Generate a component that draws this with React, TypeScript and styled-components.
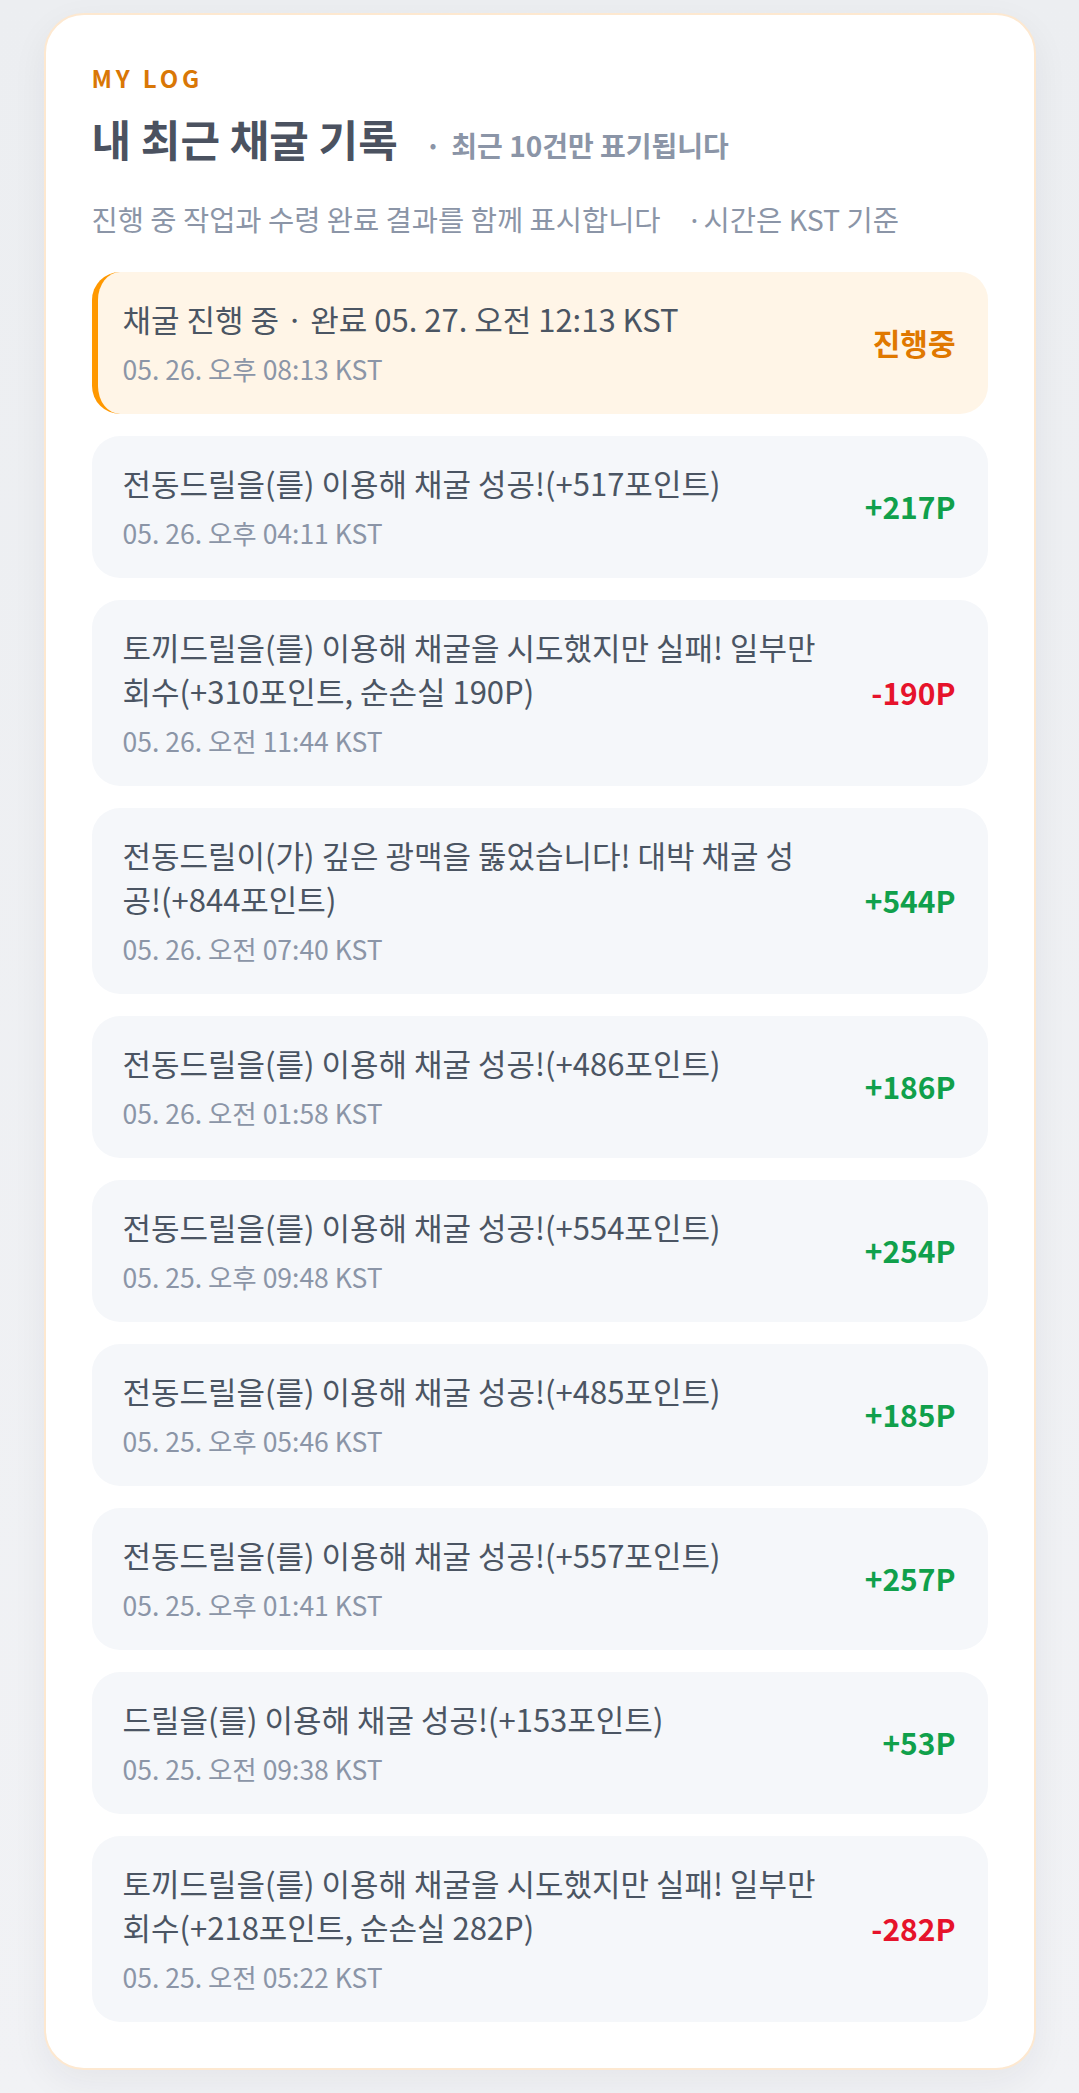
import React from 'react';
import styled, {createGlobalStyle} from 'styled-components';

type LogKind = 'pending' | 'plus' | 'minus'

type LogType = {
    id: number
    message: string
    time: string
    amount: string
    kind: LogKind
}

const logs: LogType[] = [
    {id: 1, message: '채굴 진행 중 · 완료 05. 27. 오전 12:13 KST', time: '05. 26. 오후 08:13 KST', amount: '진행중', kind: 'pending'},
    {id: 2, message: '전동드릴을(를) 이용해 채굴 성공!(+517포인트)', time: '05. 26. 오후 04:11 KST', amount: '+217P', kind: 'plus'},
    {id: 3, message: '토끼드릴을(를) 이용해 채굴을 시도했지만 실패! 일부만 회수(+310포인트, 순손실 190P)', time: '05. 26. 오전 11:44 KST', amount: '-190P', kind: 'minus'},
    {id: 4, message: '전동드릴이(가) 깊은 광맥을 뚫었습니다! 대박 채굴 성공!(+844포인트)', time: '05. 26. 오전 07:40 KST', amount: '+544P', kind: 'plus'},
    {id: 5, message: '전동드릴을(를) 이용해 채굴 성공!(+486포인트)', time: '05. 26. 오전 01:58 KST', amount: '+186P', kind: 'plus'},
    {id: 6, message: '전동드릴을(를) 이용해 채굴 성공!(+554포인트)', time: '05. 25. 오후 09:48 KST', amount: '+254P', kind: 'plus'},
    {id: 7, message: '전동드릴을(를) 이용해 채굴 성공!(+485포인트)', time: '05. 25. 오후 05:46 KST', amount: '+185P', kind: 'plus'},
    {id: 8, message: '전동드릴을(를) 이용해 채굴 성공!(+557포인트)', time: '05. 25. 오후 01:41 KST', amount: '+257P', kind: 'plus'},
    {id: 9, message: '드릴을(를) 이용해 채굴 성공!(+153포인트)', time: '05. 25. 오전 09:38 KST', amount: '+53P', kind: 'plus'},
    {id: 10, message: '토끼드릴을(를) 이용해 채굴을 시도했지만 실패! 일부만 회수(+218포인트, 순손실 282P)', time: '05. 25. 오전 05:22 KST', amount: '-282P', kind: 'minus'},
]

const amountColors: Record<LogKind, string> = {
    pending: '#e07800',
    plus: '#10a04b',
    minus: '#e6132b',
}

export default function App() {
    return (
        <>
            <GlobalStyle/>
            <Page>
                <Card>
                    <Eyebrow>MY LOG</Eyebrow>
                    <TitleRow>
                        <Title>내 최근 채굴 기록</Title>
                        <Note><Dot>·</Dot>최근 10건만 표기됩니다</Note>
                    </TitleRow>
                    <Description>
                        진행 중 작업과 수령 완료 결과를 함께 표시합니다
                        <Sep>·</Sep>
                        시간은 KST 기준
                    </Description>
                    <List>
                        {logs.map(log => (
                            <Item key={log.id} active={log.kind === 'pending'}>
                                <Body>
                                    <Message>{log.message}</Message>
                                    <Time>{log.time}</Time>
                                </Body>
                                <Amount color={amountColors[log.kind]}>{log.amount}</Amount>
                            </Item>
                        ))}
                    </List>
                </Card>
            </Page>
        </>
    );
}

const GlobalStyle = createGlobalStyle`
  html, body {
    margin: 0;
    padding: 0;
    background: #eef0f3;
  }

  body {
    font-family: "Noto Sans CJK KR", "Noto Sans", sans-serif;
  }

  * {
    box-sizing: border-box;
  }
`

const Page = styled.div`
  padding: 13px 0 25px;
  background: linear-gradient(180deg, #eceef1 0%, #f1f2f5 100%);
`

const Card = styled.section`
  width: 992px;
  margin: 0 auto;
  padding: 45px 46px 46px;
  background: #ffffff;
  border: 2px solid #fde8d0;
  border-radius: 40px;
  box-shadow: 0 12px 36px rgba(30, 41, 59, 0.06);
`

const Eyebrow = styled.div`
  color: #d97706;
  font-size: 24px;
  line-height: 36px;
  font-weight: 700;
  letter-spacing: 0.16em;
`

const TitleRow = styled.div`
  display: flex;
  align-items: baseline;
  margin-top: 14px;
`

const Title = styled.h2`
  margin: 0;
  color: #4b5260;
  font-size: 43px;
  line-height: 56px;
  font-weight: 700;
`

const Note = styled.span`
  margin-left: 27px;
  color: #8b95a7;
  font-size: 28px;
  font-weight: 600;
`

const Dot = styled.span`
  margin-right: 10px;
`

const Description = styled.p`
  margin: 33px 0 0;
  color: #8b95a7;
  font-size: 28.5px;
  line-height: 40px;
`

const Sep = styled.span`
  margin: 0 1px 0 26px;
`

const List = styled.div`
  display: flex;
  flex-direction: column;
  gap: 22px;
  margin-top: 33px;
`

type ItemPropsType = {
    active: boolean
}

const Item = styled.div<ItemPropsType>`
  display: flex;
  align-items: center;
  gap: 20px;
  padding: 25px 32px 27px 25px;
  border-left: 6px solid ${props => props.active ? '#ff9800' : 'transparent'};
  border-radius: 28px;
  background: ${props => props.active ? '#fff5e7' : '#f5f7fa'};
`

const Body = styled.div`
  flex: 1;
  min-width: 0;
  display: flex;
  flex-direction: column;
  gap: 10px;
`

const Message = styled.div`
  color: #4b5563;
  font-size: 31px;
  line-height: 44px;
`

const Time = styled.div`
  color: #8b95a7;
  font-size: 26.5px;
  line-height: 36px;
`

const Amount = styled.div<{ color: string }>`
  flex-shrink: 0;
  min-width: 112px;
  text-align: right;
  color: ${props => props.color};
  font-size: 30px;
  font-weight: 700;
  white-space: nowrap;
`
